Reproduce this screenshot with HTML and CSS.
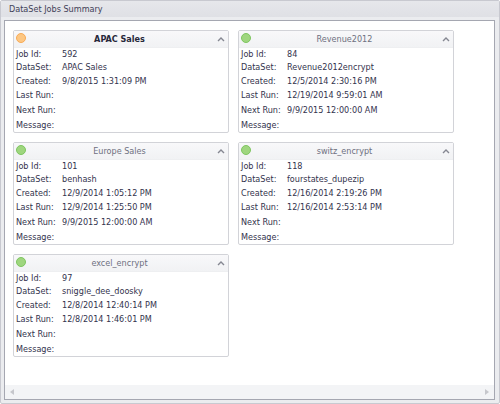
FILE: index.html
```html
<!DOCTYPE html>
<html lang="en">
<head>
<meta charset="utf-8">
<title>DataSet Jobs Summary</title>
<link rel="stylesheet" href="styles.css">
</head>
<body>
<section class="panel">
  <h1 class="panel-title">DataSet Jobs Summary</h1>
  <div class="panel-body">
    <main class="cards">
      <article class="card selected">
        <header class="card-head">
          <span class="status pending"></span>
          <h2>APAC Sales</h2>
          <button class="toggle" type="button" aria-label="Collapse"><svg viewBox="0 0 8 6"><path d="M1 5 4 2 7 5"/></svg></button>
        </header>
        <dl class="fields">
          <dt>Job Id:</dt><dd>592</dd>
          <dt>DataSet:</dt><dd>APAC Sales</dd>
          <dt>Created:</dt><dd>9/8/2015 1:31:09 PM</dd>
          <dt>Last Run:</dt><dd></dd>
          <dt>Next Run:</dt><dd></dd>
          <dt>Message:</dt><dd></dd>
        </dl>
      </article>
      <article class="card">
        <header class="card-head">
          <span class="status"></span>
          <h2>Revenue2012</h2>
          <button class="toggle" type="button" aria-label="Collapse"><svg viewBox="0 0 8 6"><path d="M1 5 4 2 7 5"/></svg></button>
        </header>
        <dl class="fields">
          <dt>Job Id:</dt><dd>84</dd>
          <dt>DataSet:</dt><dd>Revenue2012encrypt</dd>
          <dt>Created:</dt><dd>12/5/2014 2:30:16 PM</dd>
          <dt>Last Run:</dt><dd>12/19/2014 9:59:01 AM</dd>
          <dt>Next Run:</dt><dd>9/9/2015 12:00:00 AM</dd>
          <dt>Message:</dt><dd></dd>
        </dl>
      </article>
      <article class="card">
        <header class="card-head">
          <span class="status"></span>
          <h2>Europe Sales</h2>
          <button class="toggle" type="button" aria-label="Collapse"><svg viewBox="0 0 8 6"><path d="M1 5 4 2 7 5"/></svg></button>
        </header>
        <dl class="fields">
          <dt>Job Id:</dt><dd>101</dd>
          <dt>DataSet:</dt><dd>benhash</dd>
          <dt>Created:</dt><dd>12/9/2014 1:05:12 PM</dd>
          <dt>Last Run:</dt><dd>12/9/2014 1:25:50 PM</dd>
          <dt>Next Run:</dt><dd>9/9/2015 12:00:00 AM</dd>
          <dt>Message:</dt><dd></dd>
        </dl>
      </article>
      <article class="card">
        <header class="card-head">
          <span class="status"></span>
          <h2>switz_encrypt</h2>
          <button class="toggle" type="button" aria-label="Collapse"><svg viewBox="0 0 8 6"><path d="M1 5 4 2 7 5"/></svg></button>
        </header>
        <dl class="fields">
          <dt>Job Id:</dt><dd>118</dd>
          <dt>DataSet:</dt><dd>fourstates_dupezip</dd>
          <dt>Created:</dt><dd>12/16/2014 2:19:26 PM</dd>
          <dt>Last Run:</dt><dd>12/16/2014 2:53:14 PM</dd>
          <dt>Next Run:</dt><dd></dd>
          <dt>Message:</dt><dd></dd>
        </dl>
      </article>
      <article class="card">
        <header class="card-head">
          <span class="status"></span>
          <h2>excel_encrypt</h2>
          <button class="toggle" type="button" aria-label="Collapse"><svg viewBox="0 0 8 6"><path d="M1 5 4 2 7 5"/></svg></button>
        </header>
        <dl class="fields">
          <dt>Job Id:</dt><dd>97</dd>
          <dt>DataSet:</dt><dd>sniggle_dee_doosky</dd>
          <dt>Created:</dt><dd>12/8/2014 12:40:14 PM</dd>
          <dt>Last Run:</dt><dd>12/8/2014 1:46:01 PM</dd>
          <dt>Next Run:</dt><dd></dd>
          <dt>Message:</dt><dd></dd>
        </dl>
      </article>
    </main>
    <div class="scrollbar">
      <button type="button" aria-label="Scroll left"><svg viewBox="0 0 4 6"><path d="M4 0v6L0 3z"/></svg></button>
      <button type="button" aria-label="Scroll right"><svg viewBox="0 0 4 6"><path d="M0 0v6L4 3z"/></svg></button>
    </div>
  </div>
</section>
</body>
</html>
```
FILE: styles.css
```css
* {
  box-sizing: border-box;
}

body {
  margin: 0;
  font: 9px/13px Tahoma, "DejaVu Sans Condensed", "DejaVu Sans", sans-serif;
  color: #33334d;
}

h1,
h2,
dl,
dd {
  margin: 0;
  font-size: inherit;
  font-weight: normal;
}

button {
  display: flex;
  align-items: center;
  justify-content: center;
  padding: 0;
  border: 0;
  background: none;
}

.panel {
  display: flex;
  flex-direction: column;
  min-height: 100vh;
  padding: 0 4px 3px 3px;
  border: 1px solid #c8c9d0;
  border-radius: 2px;
  background: #ebecef;
}

.panel-title {
  margin: 0 -4px 3px -3px;
  padding: 2px 8px 1px;
  background: linear-gradient(#e6e7eb, #dfe0e5);
  color: #3f4157;
}

.panel-body {
  display: flex;
  flex: 1;
  flex-direction: column;
  border: 1px solid #a5a7b1;
  background: #fff;
}

.cards {
  display: grid;
  flex: 1;
  grid-template-columns: repeat(auto-fill, 216px);
  align-content: start;
  gap: 9px;
  padding: 9px 8px;
}

.card {
  border: 1px solid #d2d3d8;
  border-radius: 2px;
}

.card-head {
  display: grid;
  grid-template-columns: 10px 1fr 12px;
  align-items: center;
  height: 17px;
  padding: 0 1px 0 2px;
  background: linear-gradient(#f8f8fa, #f1f2f4);
  border-bottom: 1px solid #eeeff1;
  color: #6e7080;
  text-align: center;
}

.card-head h2 {
  padding-right: 2px;
}

.selected h2 {
  color: #27283a;
  font-weight: bold;
}

.status {
  align-self: start;
  width: 10px;
  height: 10px;
  margin-top: 2px;
  border: 1px solid #7fc661;
  border-radius: 50%;
  background: #9fd67f;
}

.pending {
  border-color: #f8ab57;
  background: #fdc783;
}

.toggle svg {
  width: 8px;
  height: 6px;
  fill: none;
  stroke: #858791;
  stroke-width: 1.4;
}

.fields {
  display: grid;
  grid-template-columns: 46px 1fr;
  grid-template-rows: 13px 13px 14px 15px 15px 14px;
  align-items: center;
  padding-left: 2px;
  white-space: nowrap;
}

.scrollbar {
  display: flex;
  justify-content: space-between;
  height: 14px;
  padding: 0 3px;
  background: #f3f4f6;
}

.scrollbar button {
  width: 8px;
}

.scrollbar svg {
  width: 4px;
  height: 6px;
  fill: #c6c7cc;
}
```
